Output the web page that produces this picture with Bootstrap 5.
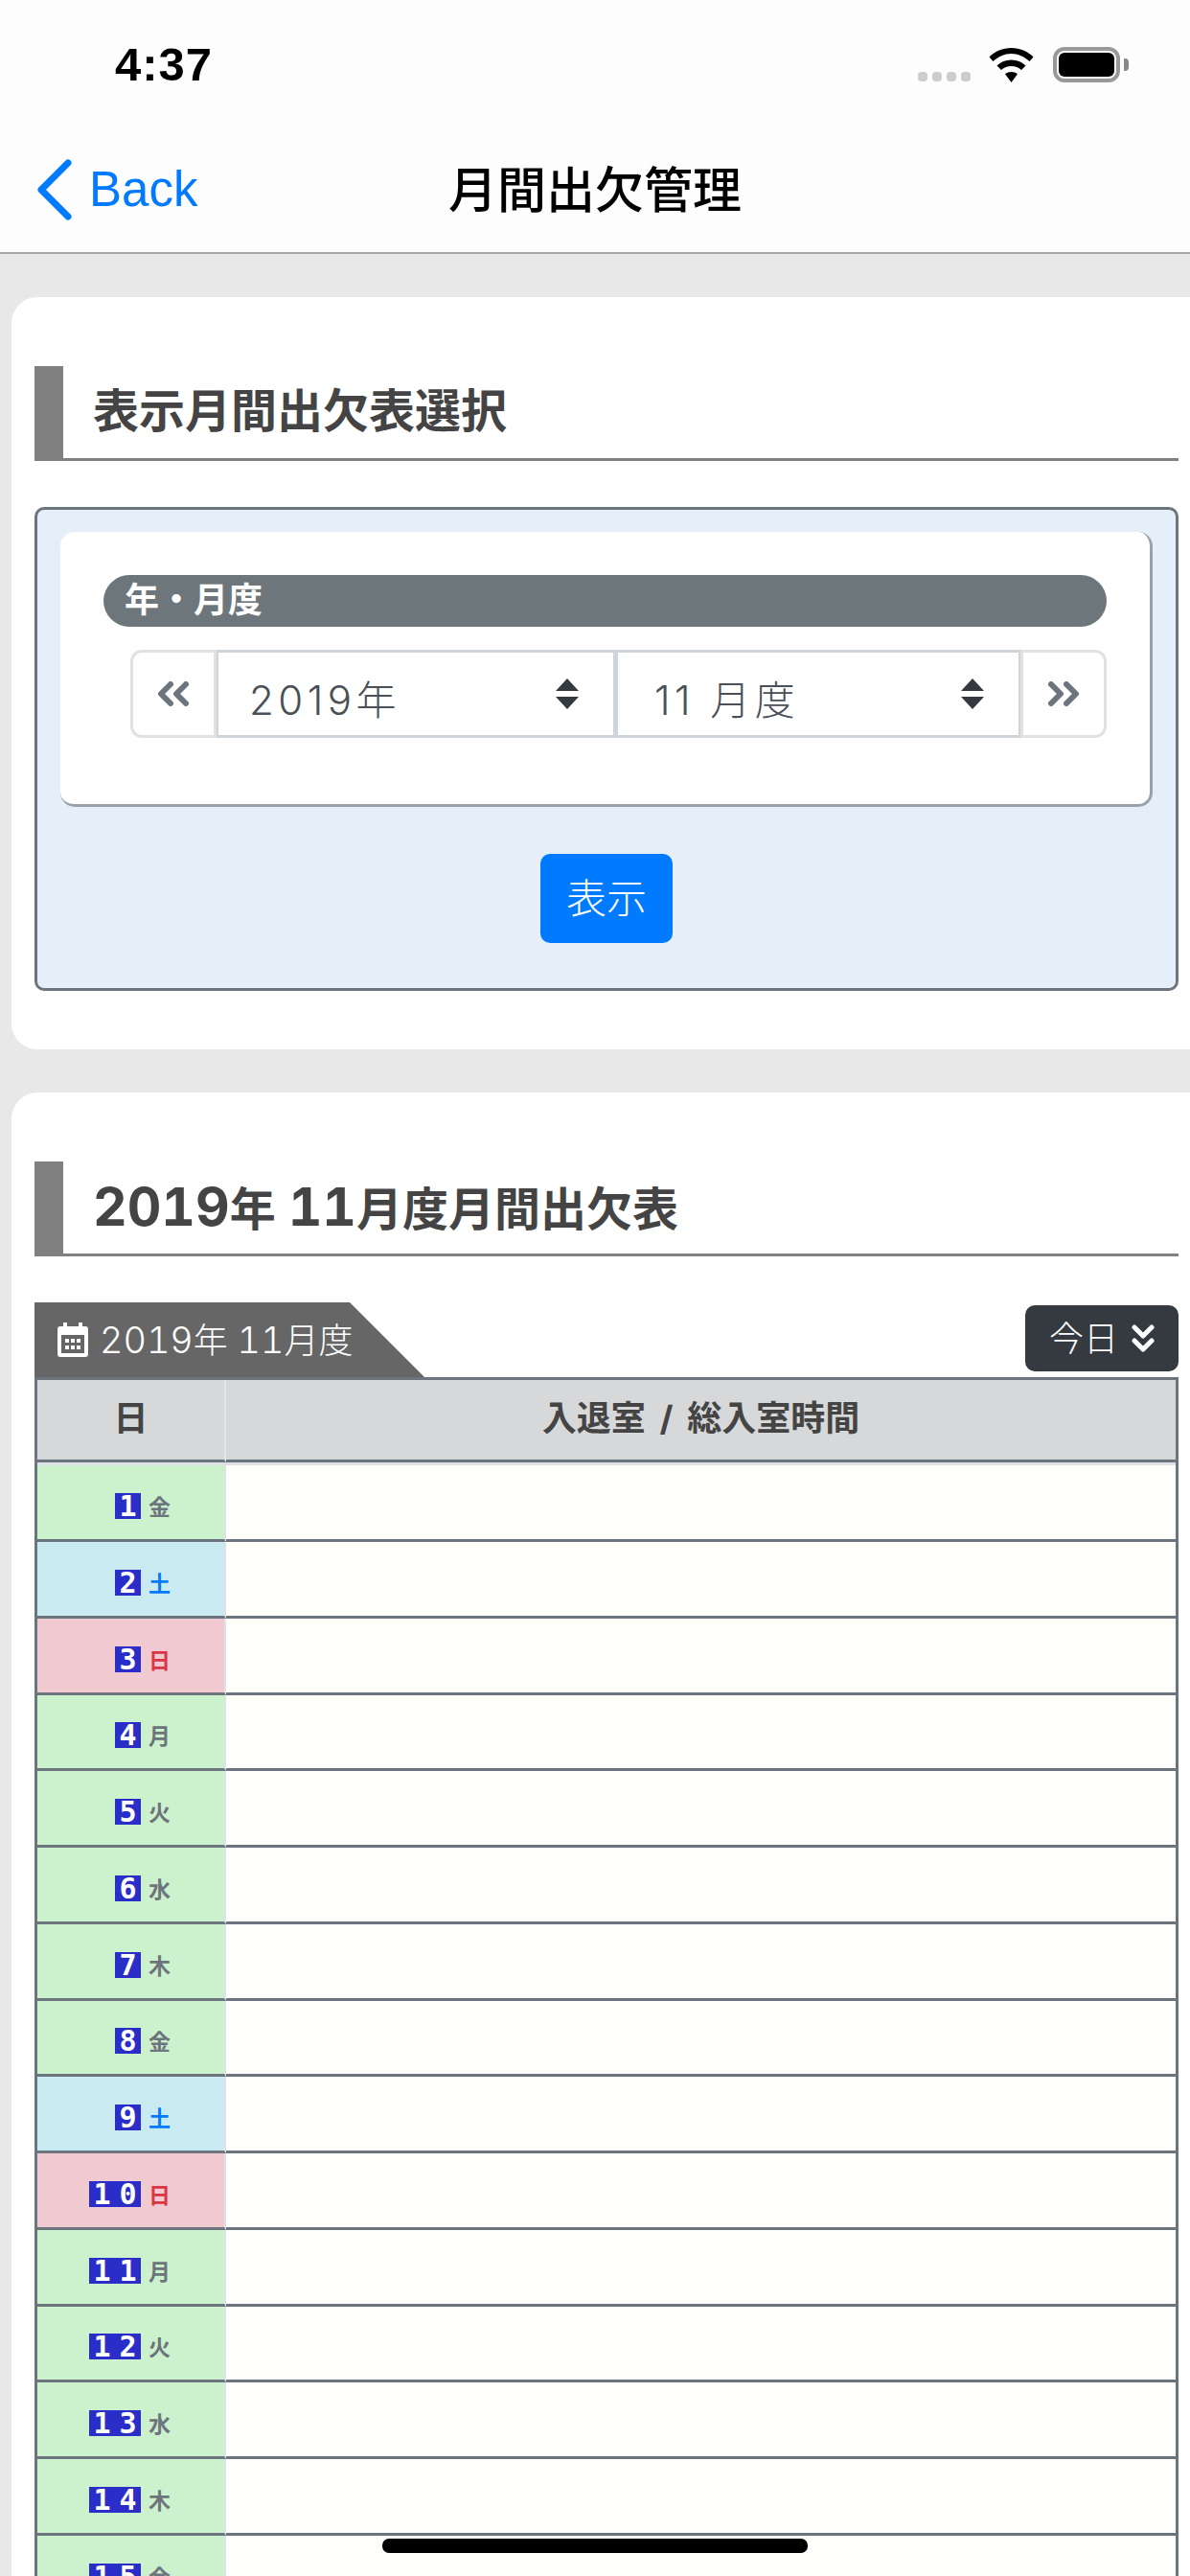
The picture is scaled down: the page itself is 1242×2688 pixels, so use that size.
<!DOCTYPE html>
<html lang="ja">
<head>
  <meta charset="UTF-8">
  <title>月間出欠管理</title>
  <meta name="viewport" content="width=device-width, initial-scale=1">
  <link href="https://cdn.jsdelivr.net/npm/bootstrap@5.3.3/dist/css/bootstrap.min.css" rel="stylesheet">
  <style>
    html, body { height: 2688px; overflow: hidden; }
    body { background: #e8e8e8; font-family: "Inter", "Noto Sans CJK JP", sans-serif; font-variant-numeric: tabular-nums; color: #444; position: relative; }

    /* phone chrome */
    .phone-top { background: #fdfdfd; border-bottom: 2px solid #a8a8a8; height: 265px; }
    .status-row { height: 132px; padding: 49px 73px 0 120px; }
    .clock { font-family: "Liberation Sans", sans-serif; font-weight: 700; font-size: 49px; line-height: 37px; letter-spacing: 1px; color: #000; }
    .sig-dots { gap: 5px; margin-right: 19px; padding-bottom: 1px; }
    .sig-dots i { width: 10px; height: 10px; border-radius: 4px; background: #ccc; display: block; }
    .batt { width: 70px; height: 37px; border: 4px solid #999; border-radius: 12px; padding: 2px; margin-left: 20px; position: relative; }
    .batt i { display: block; height: 100%; background: #000; border-radius: 6px; }
    .batt::after { content: ""; position: absolute; right: -13px; top: 8px; width: 5px; height: 13px; background: #888; border-radius: 0 4px 4px 0; }
    .top-nav { height: 132px; padding: 0; display: grid; grid-template-columns: 1fr auto 1fr; }
    .back-link { color: #007aff; font-family: "Liberation Sans", sans-serif; font-size: 51px; text-decoration: none; padding-left: 38px; gap: 18px; }
    .nav-title { font-family: "Noto Sans CJK JP", sans-serif; font-weight: 500; font-size: 51px; color: #000; line-height: 1; padding-bottom: 6px; }

    /* sheets */
    .sheet { margin: 45px 0 45px 12px; border: 0; border-radius: 27px 0 0 27px; background: #fff; padding: 72px 12px 61px 24px; }
    .sheet-last { border-radius: 27px 0 0 0; }
    .sheet-head { height: 99px; border-left: 30px solid #808080; border-bottom: 3px solid #808080; padding: 0 0 0 31px; margin: 0 0 48px; font-size: 48px; font-weight: 700; line-height: 94px; color: #444; }
    .num-wide { font-size: 1.15em; }
    .tab-flag .num-wide { font-size: 1.05em; }

    /* month picker */
    .pick-box { border: 3px solid #6c757d; border-radius: 10px; background: #e6eef9; padding: 23px 24px 47px; }
    .pick-inner { background: #fff; border-right: 3px solid #9aa1a9; border-bottom: 3px solid #9aa1a9; border-radius: 15px; padding: 45px 45px 69px; }
    .pick-label { background: #6c767b; color: #fff; font-size: 36px; font-weight: 700; height: 54px; line-height: 52px; padding: 0 22px; border-radius: 27px; margin-bottom: 24px; }
    .pick-group { margin-left: 28px; height: 92px; width: auto; }
    .pick-group .btn { width: 90px; height: 92px; padding: 0; background: #fff; border: 3px solid #dfe1e3; border-radius: 12px; display: flex; align-items: center; justify-content: center; }
    .pick-group .form-select { height: 92px; font-family: inherit; font-size: 42px; font-weight: 300; letter-spacing: 4.5px; color: #495057; border: 3px solid #ced4da; border-radius: 0; padding: 12px 80px 0 32px; background-position: right 35px center; background-size: 26px 32px;
      background-image: url("data:image/svg+xml,%3Csvg xmlns='http://www.w3.org/2000/svg' viewBox='0 0 26 32'%3E%3Cpath fill='%23343a40' d='M13 0l12 13H1zM13 32L1 19h24z'/%3E%3C/svg%3E"); }
    .pick-group .form-select + .form-select { padding-left: 38px; }
    .show-btn { background: #007bff; border: 0; width: 138px; height: 93px; font-size: 42px; font-weight: 300; border-radius: 10px; padding: 0; color: #fff; margin-top: 49px; }

    /* attendance table */
    .tab-flag { width: 407px; height: 78px; background: #666; color: #fff; font-size: 36px; font-weight: 300; padding-left: 24px; gap: 12px; clip-path: polygon(0 0, 329px 0, 100% 100%, 0 100%); }
    .today-btn { width: 160px; height: 69px; background: #343a40; border: 0; color: #fff; font-size: 36px; font-weight: 300; border-radius: 10px; padding: 0; margin-bottom: 6px; gap: 14px; }
    .att-table { table-layout: fixed; border-collapse: separate; border-spacing: 0; margin: 0; border: solid #6c757d; border-width: 3px 3px 0; width: 100%; }
    .att-table th { height: 86px; padding: 0 0 3px; border-bottom: 3px solid #6c757d; font-size: 36px; font-weight: 700; word-spacing: 5px; text-align: center; vertical-align: middle; color: #444; --bs-table-bg: #d7d8d9; }
    .att-table th:first-child { width: 197px; border-right: 2px solid #e4e7ea; }
    .att-table td { height: 79.75px; padding: 8px 0 0; border-bottom: 3px solid #6c757d; vertical-align: middle; --bs-table-bg: #fefffb; }
    .att-table tbody tr:first-child td { height: 83px; border-top: 3px solid #dee2e6; }
    .att-table td.day-cell { padding-right: 56px; border-right: 2px solid #dee2e6; }
    .day-work { --bs-table-bg: #ccf2cd !important; }
    .day-sat { --bs-table-bg: #caeaf1 !important; }
    .day-sun { --bs-table-bg: #f1cad1 !important; }
    .day-digit { font-family: "DejaVu Sans Mono", monospace; font-weight: 700; font-size: 30px; line-height: 27px; width: 27px; height: 27px; text-align: center; background: #2b2dc8; color: #fff; display: block; }
    .day-name { font-size: 23px; line-height: 27px; font-weight: 700; width: 23px; margin-left: 8px; color: #6c757d; font-family: "Noto Sans CJK JP", sans-serif; }
    .day-sat .day-name { color: #007bff; }
    .day-sun .day-name { color: #dc3545; }

    .home-bar { position: absolute; left: 399px; top: 2649px; width: 444px; height: 15px; background: #000; border-radius: 7px; }
  </style>
</head>
<body>
<div class="phone-top">
  <div class="status-row d-flex justify-content-between align-items-start">
    <span class="clock">4:37</span>
    <div class="d-flex align-items-end">
      <div class="sig-dots d-flex"><i></i><i></i><i></i><i></i></div>
      <svg width="47" height="36" viewBox="0 0 47 36"><path fill="#000" d="M23.5 0C14.5 0 6.5 3.5.5 9.5L4.5 14C10 9 16.5 6 23.5 6S37 9 42.5 14L46.5 9.5C40.5 3.5 32.5 0 23.5 0ZM23.5 12.5C17.5 12.5 12.5 14.8 8.5 18.5L13 23C16 20.5 19.5 19 23.5 19S31 20.5 34 23L38.5 18.5C34.5 14.8 29.5 12.5 23.5 12.5ZM23.5 25C21 25 19 25.8 17 27.3L23.5 36 30 27.3C28 25.8 26 25 23.5 25Z"/></svg>
      <div class="batt"><i></i></div>
    </div>
  </div>
  <nav class="navbar top-nav">
    <a class="back-link d-flex align-items-center" href="#">
      <svg width="37" height="64" viewBox="0 0 37 64"><path d="M33 4L5 32l28 28" fill="none" stroke="#007aff" stroke-width="7" stroke-linecap="round" stroke-linejoin="round"/></svg>
      Back
    </a>
    <span class="nav-title">月間出欠管理</span>
    <span></span>
  </nav>
</div>

<div class="card sheet">
  <h2 class="sheet-head">表示月間出欠表選択</h2>
  <div class="pick-box">
    <div class="pick-inner">
      <div class="pick-label">年・月度</div>
      <div class="input-group flex-nowrap pick-group">
        <button class="btn" type="button">
          <svg width="34" height="26" viewBox="0 0 34 26"><path d="M14 3L4 13l10 10M30 3L20 13l10 10" fill="none" stroke="#6c757d" stroke-width="6" stroke-linecap="round" stroke-linejoin="round"/></svg>
        </button>
        <select class="form-select"><option>2019年</option></select>
        <select class="form-select"><option>11 月度</option></select>
        <button class="btn" type="button">
          <svg width="34" height="26" viewBox="0 0 34 26"><path d="M4 3l10 10L4 23M20 3l10 10-10 10" fill="none" stroke="#6c757d" stroke-width="6" stroke-linecap="round" stroke-linejoin="round"/></svg>
        </button>
      </div>
    </div>
    <div class="text-center"><button class="btn show-btn" type="button">表示</button></div>
  </div>
</div>

<div class="card sheet sheet-last">
  <h2 class="sheet-head"><span class="num-wide">2019</span>年 <span class="num-wide">11</span>月度月間出欠表</h2>
  <div class="d-flex justify-content-between align-items-end">
    <div class="tab-flag d-flex align-items-center">
      <svg width="32" height="36" viewBox="0 0 32 36"><path fill="#fff" fill-rule="evenodd" d="M6 0h4v4h12V0h4v4h3a3 3 0 0 1 3 3v26a3 3 0 0 1-3 3H3a3 3 0 0 1-3-3V7a3 3 0 0 1 3-3h3ZM4 13v19h24V13ZM8 17h4v4H8Zm6 0h4v4h-4Zm6 0h4v4h-4ZM8 24h4v4H8Zm6 0h4v4h-4Zm6 0h4v4h-4Z"/></svg>
      <span><span class="num-wide">2019</span>年 <span class="num-wide">11</span>月度</span>
    </div>
    <button class="btn today-btn d-flex align-items-center justify-content-center" type="button">
      <span>今日</span>
      <svg width="24" height="30" viewBox="0 0 24 30"><path d="M3 3l9 9 9-9M3 17l9 9 9-9" fill="none" stroke="#fff" stroke-width="5" stroke-linecap="round" stroke-linejoin="round"/></svg>
    </button>
  </div>
  <table class="table att-table">
    <thead>
      <tr><th>日</th><th>入退室 / 総入室時間</th></tr>
    </thead>
    <tbody id="att-rows"></tbody>
  </table>
</div>

<div class="home-bar"></div>

<script src="https://cdn.jsdelivr.net/npm/bootstrap@5.3.3/dist/js/bootstrap.bundle.min.js"></script>
<script>
// November 2019 starts on a Friday
const names = ["金", "土", "日", "月", "火", "水", "木"];
let rows = "";
for (let d = 1; d <= 15; d++) {
  let wd = names[(d - 1) % 7];
  let cls = wd == "土" ? "day-sat" : wd == "日" ? "day-sun" : "day-work";
  let digits = String(d).split("").map(c => `<span class="day-digit">${c}</span>`).join("");
  rows += `<tr><td class="day-cell ${cls}"><div class="d-flex justify-content-end align-items-center">${digits}<span class="day-name">${wd}</span></div></td><td></td></tr>`;
}
document.getElementById("att-rows").innerHTML = rows;
</script>
</body>
</html>
